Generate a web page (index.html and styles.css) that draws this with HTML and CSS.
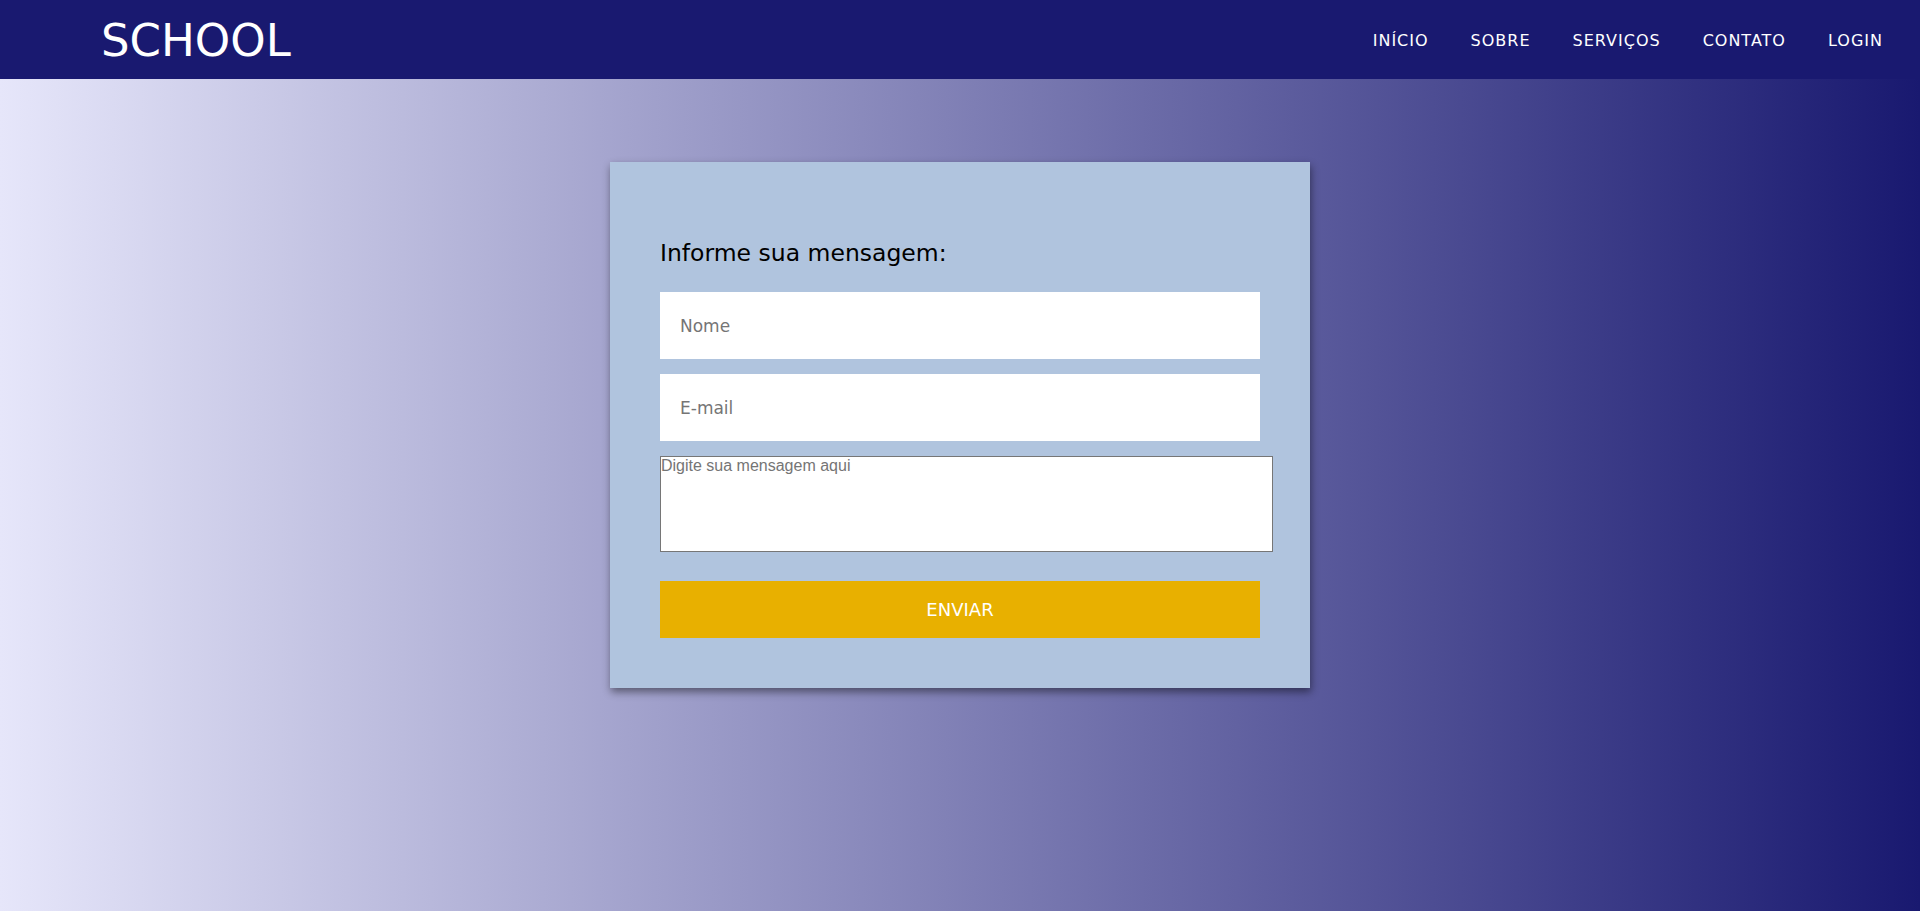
FILE: index.html
```html
<!DOCTYPE html>
<html lang="pt-BR">
<head>
<meta charset="utf-8">
<title>School - Contato</title>
<link rel="stylesheet" href="styles.css">
</head>
<body>
<header class="topbar">
  <div class="logo">SCHOOL</div>
  <nav class="menu">
    <a href="#">INÍCIO</a>
    <a href="#">SOBRE</a>
    <a href="#">SERVIÇOS</a>
    <a href="#">CONTATO</a>
    <a href="#">LOGIN</a>
  </nav>
</header>
<main class="content">
  <form class="card">
    <h2 class="card-title">Informe sua mensagem:</h2>
    <input class="field" type="text" placeholder="Nome">
    <input class="field" type="email" placeholder="E-mail">
    <textarea class="message" placeholder="Digite sua mensagem aqui"></textarea>
    <button class="send" type="button">ENVIAR</button>
  </form>
</main>
</body>
</html>
```

FILE: styles.css
```css
html, body {
  margin: 0;
  padding: 0;
  height: 100%;
}

body {
  background: linear-gradient(to right, #e6e6fa, #191970);
  font-family: "DejaVu Sans", Verdana, sans-serif;
}

.topbar {
  height: 79px;
  background: #191970;
  display: flex;
  align-items: center;
  justify-content: space-between;
  padding: 0 37px 0 101px;
}

.logo {
  color: #fff;
  font-size: 45px;
  line-height: 1;
  margin-top: 2px;
}

.menu {
  display: flex;
  gap: 42px;
  margin-top: 2px;
}

.menu a {
  color: #fff;
  text-decoration: none;
  font-size: 16px;
  letter-spacing: 1px;
}

.content {
  display: flex;
  justify-content: center;
  padding-top: 83px;
}

.card {
  width: 700px;
  box-sizing: border-box;
  background: #b0c4de;
  padding: 77px 50px 50px;
  box-shadow: 1px 4px 8px rgba(0, 0, 0, 0.45);
  display: flex;
  flex-direction: column;
}

.card-title {
  margin: 0 0 25px;
  font-size: 23.5px;
  font-weight: normal;
  color: #000;
}

.field {
  width: 600px;
  height: 67px;
  box-sizing: border-box;
  border: none;
  padding: 0 20px;
  margin: 0 0 15px;
  font-family: "DejaVu Sans", Verdana, sans-serif;
  font-size: 17px;
  background: #fff;
  outline: none;
}

.field::placeholder {
  color: #757575;
}

.message {
  width: 613px;
  height: 96px;
  box-sizing: border-box;
  border: 1px solid #767676;
  padding: 0;
  margin: 0 0 29px;
  font-family: "Liberation Sans", Arial, sans-serif;
  font-size: 16px;
  resize: none;
  background: #fff;
}

.message::placeholder {
  color: #757575;
}

.send {
  width: 600px;
  height: 57px;
  border: none;
  background: #e8b000;
  color: #fff;
  font-family: "DejaVu Sans", Verdana, sans-serif;
  font-size: 18px;
  padding: 0;
}
```
